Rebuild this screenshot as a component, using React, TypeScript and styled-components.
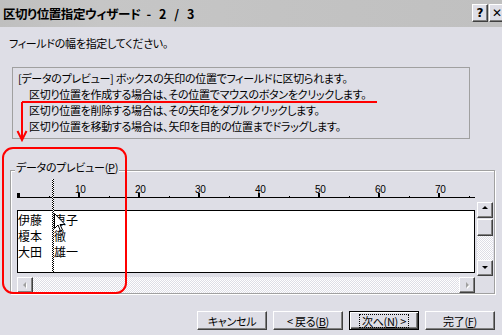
import React from "react";
import styled, { createGlobalStyle, css } from "styled-components";

const BG = "#dedee6";

const GlobalStyle = createGlobalStyle`
  html, body { margin: 0; padding: 0; background: ${BG}; }
  body { font-family: "Noto Sans CJK JP", "Noto Sans", sans-serif; }
`;

const Window = styled.div`
  position: relative;
  width: 502px;
  height: 335px;
  overflow: hidden;
  background: ${BG};
  display: flex;
  flex-direction: column;
  font-family: "Noto Sans CJK JP", "Noto Sans", sans-serif;
  font-size: 11px;
  letter-spacing: -0.3px;
  font-feature-settings: "palt";
  color: #000;
`;

const TitleBar = styled.div`
  flex: none;
  height: 27px;
  display: flex;
  align-items: center;
  padding-left: 3px;
  background: linear-gradient(to right, #bfbfbf 0%, #c6c6c6 20%, #c3c3c3 55%, #c0c0c0 100%);
`;

const Title = styled.div`
  flex: 1;
  font-weight: bold;
  font-size: 12.5px;
  letter-spacing: -0.4px;
  white-space: pre;
  line-height: 27px;
`;

const TitleStep = styled.span`
  letter-spacing: 2.5px;
  margin-left: 6px;
`;

const CaptionButtons = styled.div`
  display: flex;
  gap: 1px;
  align-self: flex-start;
  margin-top: 4px;
  margin-right: -3px;
`;

const CaptionButton = styled.div`
  box-sizing: border-box;
  width: 16px;
  height: 18px;
  background: ${BG};
  border-style: solid;
  border-width: 1px;
  border-color: #fff #404040 #404040 #fff;
  box-shadow: inset -1px -1px 0 #808080;
  display: flex;
  align-items: center;
  justify-content: center;
  letter-spacing: 0;
  font: bold 12px "DejaVu Sans", sans-serif;
`;

const Body = styled.div`
  flex: 1;
  display: flex;
  flex-direction: column;
  padding: 0 7px 0 9px;
`;

const Instruction = styled.div`
  margin-top: 8px;
  line-height: 16px;
`;

const InfoBox = styled.div`
  box-sizing: border-box;
  margin: 16px 0 0 3px;
  width: 458px;
  height: 72px;
  border: 1px solid #a0a0a0;
  padding-top: 2px;
`;

const InfoLine = styled.div<{ $indent?: boolean }>`
  line-height: 16px;
  white-space: pre;
  padding-left: ${(p) => (p.$indent ? "16px" : "5px")};
`;

const GroupBox = styled.div`
  box-sizing: border-box;
  margin: 31px 0 0 1px;
  width: 485px;
  border: 1px solid #a0a0a0;
  box-shadow: inset 1px 1px 0 #fff, 1px 1px 0 #fff;
  padding: 0 1px 0 6px;
  display: flex;
  flex-direction: column;
`;

const GroupLabel = styled.div`
  align-self: flex-start;
  margin: -11px 0 0 -2px;
  padding: 0 1px;
  background: ${BG};
  line-height: 14px;
  white-space: pre;
`;

const PreviewRow = styled.div`
  display: flex;
  margin-top: 6px;
`;

const LeftCol = styled.div`
  position: relative;
  width: 458px;
  display: flex;
  flex-direction: column;
`;

const RulerSvg = styled.svg`
  display: block;
  width: 458px;
  height: 30px;
`;

const DataBox = styled.div`
  box-sizing: border-box;
  height: 63px;
  background: #fff;
  border: 1px solid #000;
  padding-top: 1px;
  font-size: 12px;
  letter-spacing: 0;
  font-feature-settings: normal;
`;

const DataRow = styled.div`
  display: flex;
  line-height: 16px;
`;

const Field = styled.span<{ $w?: number }>`
  white-space: pre;
  ${(p) =>
    p.$w &&
    css`
      width: ${p.$w}px;
      flex: none;
    `}
`;

const BreakLine = styled.div`
  position: absolute;
  left: 35px;
  top: -1px;
  width: 2px;
  height: 93px;
  background-image: conic-gradient(#000 25%, #fff 0 50%, #000 0 75%, #fff 0);
  background-size: 2px 2px;
`;

const Cursor = styled.svg`
  position: absolute;
  left: 37px;
  top: 33px;
  width: 12px;
  height: 20px;
`;

const checker = css`
  background-color: #fff;
  background-image: conic-gradient(${BG} 25%, #fff 0 50%, ${BG} 0 75%, #fff 0);
  background-size: 2px 2px;
`;

const HScroll = styled.div`
  display: flex;
  height: 16px;
  margin-top: 4px;
`;

const VScroll = styled.div`
  display: flex;
  flex-direction: column;
  width: 16px;
  height: 74px;
  margin: 22px 0 0 2px;
`;

const Track = styled.div`
  flex: 1;
  ${checker}
`;

const ScrollBtn = styled.div`
  box-sizing: border-box;
  flex: none;
  width: 16px;
  height: 16px;
  background: ${BG};
  border-style: solid;
  border-width: 1px;
  border-color: #fff #404040 #404040 #fff;
  box-shadow: inset -1px -1px 0 #808080;
  display: flex;
  align-items: center;
  justify-content: center;
`;

const Thumb = styled(ScrollBtn)`
  height: 17px;
  margin-top: 1px;
`;

const ButtonRow = styled.div`
  display: flex;
  justify-content: flex-end;
  gap: 6px;
  margin-top: 17px;
`;

const Button = styled.div<{ $default?: boolean }>`
  box-sizing: border-box;
  width: 70px;
  height: 19px;
  background: ${BG};
  display: flex;
  align-items: center;
  justify-content: center;
  line-height: 14px;
  white-space: pre;
  ${(p) =>
    p.$default
      ? css`
          border: 1px solid #000;
          box-shadow: inset 1px 1px 0 #fff, inset -1px -1px 0 #404040, inset -2px -2px 0 #808080;
        `
      : css`
          border-style: solid;
          border-width: 1px;
          border-color: #fff #404040 #404040 #fff;
          box-shadow: inset -1px -1px 0 #808080;
        `}
`;

const FocusRect = styled.span`
  border: 1px dotted #000;
  padding: 0 2px;
  line-height: 12px;
`;

const Overlay = styled.svg`
  position: absolute;
  left: 0;
  top: 0;
  width: 502px;
  height: 335px;
  pointer-events: none;
`;

function Ruler() {
  const ticks: React.ReactNode[] = [];
  for (let n = 0; n <= 75; n++) {
    const x = 2 + 6 * n;
    const major = n % 10 === 0;
    const mid = n % 5 === 0;
    const h = major ? 5 : mid ? 2 : 1;
    ticks.push(<rect key={n} x={major ? x - 1 : x} y={18 - h} width={major ? 2 : 1} height={h} fill="#000" />);
  }
  const labels = [10, 20, 30, 40, 50, 60, 70];
  return (
    <RulerSvg viewBox="0 0 458 30">
      <rect x={0} y={17} width={458} height={1} fill="#000" />
      <rect x={0} y={13} width={2} height={5} fill="#000" />
      {ticks}
      {labels.map((l) => (
        <text
          key={l}
          x={2 + 6 * l - 4}
          y={13}
          fontFamily="Liberation Sans, sans-serif"
          fontSize="10"
          fill="#000"
        >
          {l}
        </text>
      ))}
    </RulerSvg>
  );
}

const Arrow = ({ dir, disabled }: { dir: "up" | "down" | "left" | "right"; disabled?: boolean }) => {
  const pts = {
    up: "4,6 7,3 10,6",
    down: "4,5 10,5 7,8",
    left: "8,4 8,10 5,7",
    right: "6,4 6,10 9,7",
  }[dir];
  return (
    <svg width="14" height="14" viewBox="0 0 14 14">
      {disabled && <polygon points={pts} fill="#fff" transform="translate(1,1)" />}
      <polygon points={pts} fill={disabled ? "#a0a0a0" : "#000"} />
    </svg>
  );
};

export default function App() {
  return (
    <>
      <GlobalStyle />
      <Window>
        <TitleBar>
          <Title>
            区切り位置指定ウィザード<TitleStep>- 2 / 3</TitleStep>
          </Title>
          <CaptionButtons>
            <CaptionButton>?</CaptionButton>
            <CaptionButton>✕</CaptionButton>
          </CaptionButtons>
        </TitleBar>
        <Body>
          <Instruction>フィールドの幅を指定してください。</Instruction>
          <InfoBox>
            <InfoLine>[データのプレビュー] ボックスの矢印の位置でフィールドに区切られます。</InfoLine>
            <InfoLine $indent>区切り位置を作成する場合は、その位置でマウスのボタンをクリックします。</InfoLine>
            <InfoLine $indent>区切り位置を削除する場合は、その矢印をダブル クリックします。</InfoLine>
            <InfoLine $indent>区切り位置を移動する場合は、矢印を目的の位置までドラッグします。</InfoLine>
          </InfoBox>
          <GroupBox>
            <GroupLabel>
              データのプレビュー(<u>P</u>)
            </GroupLabel>
            <PreviewRow>
              <LeftCol>
                <Ruler />
                <DataBox>
                  <DataRow>
                    <Field $w={36}>伊藤</Field>
                    <Field>恵子</Field>
                  </DataRow>
                  <DataRow>
                    <Field $w={36}>榎本</Field>
                    <Field>徹</Field>
                  </DataRow>
                  <DataRow>
                    <Field $w={36}>大田</Field>
                    <Field>雄一</Field>
                  </DataRow>
                </DataBox>
                <HScroll>
                  <ScrollBtn>
                    <Arrow dir="left" disabled />
                  </ScrollBtn>
                  <Track />
                  <ScrollBtn>
                    <Arrow dir="right" disabled />
                  </ScrollBtn>
                </HScroll>
                <BreakLine />
                <Cursor viewBox="0 0 12 20">
                  <path d="M0.5 0.5 L0.5 15.5 L4 12 L6.5 18 L8.5 17 L6 11.5 L11 11.5 Z" fill="#fff" stroke="#000" strokeWidth="1" />
                </Cursor>
              </LeftCol>
              <VScroll>
                <ScrollBtn>
                  <Arrow dir="up" />
                </ScrollBtn>
                <Thumb />
                <Track />
                <ScrollBtn>
                  <Arrow dir="down" />
                </ScrollBtn>
              </VScroll>
            </PreviewRow>
          </GroupBox>
          <ButtonRow>
            <Button>キャンセル</Button>
            <Button>
              {"< 戻る("}
              <u>B</u>)
            </Button>
            <Button $default>
              <FocusRect>
                次へ(<u>N</u>){" >"}
              </FocusRect>
            </Button>
            <Button>
              完了(<u>F</u>)
            </Button>
          </ButtonRow>
        </Body>
        <Overlay viewBox="0 0 502 335">
          <g fill="none" stroke="#ff0000" strokeWidth="2">
            <line x1="22" y1="102" x2="377" y2="102" />
            <line x1="22" y1="102" x2="22" y2="140" />
            <polyline points="17.5,131 22,140 26.5,131" />
            <rect x="3" y="148" width="123" height="145" rx="10" ry="10" />
          </g>
        </Overlay>
      </Window>
    </>
  );
}
